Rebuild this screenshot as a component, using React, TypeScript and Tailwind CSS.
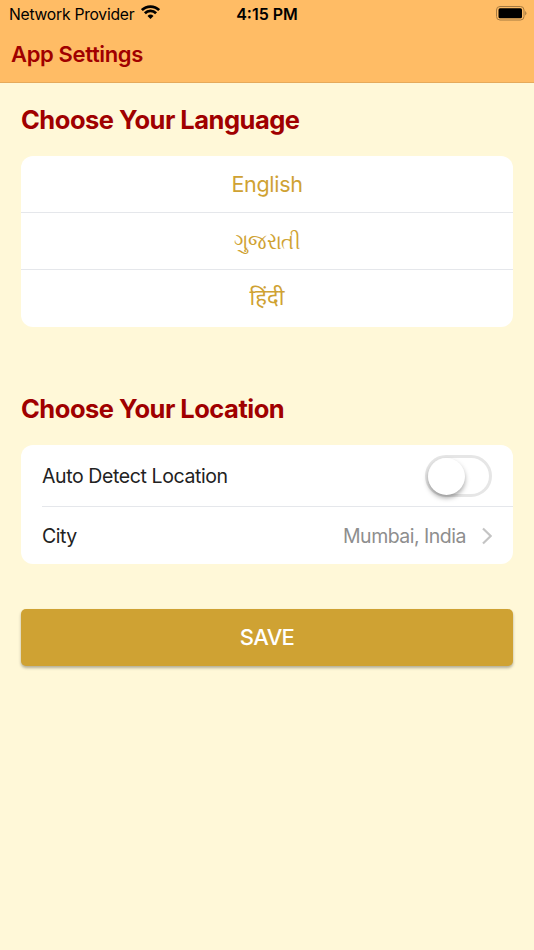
import { useState } from 'react';

const LANGUAGES = [
  { id: 'en', label: 'English', className: 'pt-px text-[21.5px] tracking-[-0.3px]' },
  { id: 'gu', label: 'ગુજરાતી', className: 'text-[22px] scale-x-[.89]' },
  { id: 'hi', label: 'हिंदी', className: 'pb-0.5 text-[22px]' },
];

function StatusBar() {
  return (
    <div className="grid grid-cols-3 items-center h-7 pl-[9px] pr-[7px] text-black">
      <div className="flex items-center gap-[7px] text-[15.7px] tracking-[-0.26px] whitespace-nowrap">
        <span className="pt-px">Network Provider</span>
        <svg className="-mt-[3px]" width="19" height="14" viewBox="0 0 19 14" fill="none" stroke="#000" strokeWidth="2.7">
          <path d="M0.9 5.1 A12.2 12.2 0 0 1 18.1 5.1" />
          <path d="M3.9 8.2 A7.9 7.9 0 0 1 15.1 8.2" />
          <path d="M9.5 14 L6.5 11 A4.3 4.3 0 0 1 12.5 11 Z" fill="#000" stroke="none" />
        </svg>
      </div>
      <div className="-ml-0.5 text-center text-[16px] font-semibold">4:15 PM</div>
      <div className="flex justify-end">
        <svg className="-mt-[2px]" width="31" height="15" viewBox="0 0 31 15">
          <rect x="0.5" y="0.5" width="27.5" height="13.5" rx="3.5" fill="none" stroke="#a67a41" />
          <rect x="2.5" y="2.3" width="23.5" height="10" rx="1.5" fill="#000" />
          <path d="M29.2 5 Q31.6 7.2 29.2 9.5 Z" fill="#a67a41" />
        </svg>
      </div>
    </div>
  );
}

export default function App() {
  const [autoDetect, setAutoDetect] = useState(false);

  return (
    <div className="min-h-screen bg-[#fff8d8] font-['Inter','Noto_Sans',sans-serif]">
      <header className="h-[83px] bg-[#ffbc65] border-b border-[#e6aa5b]">
        <StatusBar />
        <h1 className="px-[11px] pt-[11px] text-[22px] leading-[30px] font-semibold tracking-[-0.36px] text-[#a00000]">
          App Settings
        </h1>
      </header>

      <main className="px-[21px]">
        <h2 className="pt-[19px] text-[25.5px] leading-9 font-bold tracking-[-0.5px] text-[#a00000]">Choose Your Language</h2>
        <div className="mt-[18px] h-[171px] rounded-xl bg-white overflow-hidden">
          {LANGUAGES.map((lang) => (
            <button key={lang.id} className="block w-full h-[57px] border-b border-gray-200 last:border-0 text-[#cfa233]">
              <span className={`inline-block ${lang.className}`}>{lang.label}</span>
            </button>
          ))}
        </div>

        <h2 className="mt-[64px] text-[25.5px] leading-9 font-bold tracking-[-0.5px] text-[#a00000]">Choose Your Location</h2>
        <div className="mt-[18px] rounded-xl bg-white pl-[21px] text-[19.5px] text-[#222]">
          <div className="flex items-center justify-between h-[62px] pr-[21px] border-b border-gray-200">
            <span className="pt-[3px] tracking-[-0.4px]">Auto Detect Location</span>
            <button
              role="switch"
              aria-checked={autoDetect}
              onClick={() => setAutoDetect(!autoDetect)}
              className="w-[67px] h-[42px] rounded-full border-[3px] border-[#e6e6e6]"
            >
              <span className="block size-[37px] rounded-full bg-white shadow-[0_3px_5px_rgba(0,0,0,0.35)]" />
            </button>
          </div>
          <div className="flex items-center h-[57px] pr-[21px]">
            <span className="pt-[3px] tracking-[-0.5px]">City</span>
            <span className="ml-auto pt-[3px] tracking-[-0.5px] text-[#8e8e8e]">Mumbai, India</span>
            <svg className="ml-4" width="10" height="18" viewBox="0 0 10 18" fill="none" stroke="#c4c4c4" strokeWidth="2.2">
              <path d="M1 1.5 L8.7 9 L1 16.5" />
            </svg>
          </div>
        </div>

        <button className="mt-[45px] w-full h-[57px] rounded-[5px] bg-[#cfa233] text-[22px] font-medium tracking-[-0.6px] text-white shadow-[0_2px_3px_rgba(0,0,0,0.3)]">
          SAVE
        </button>
      </main>
    </div>
  );
}
